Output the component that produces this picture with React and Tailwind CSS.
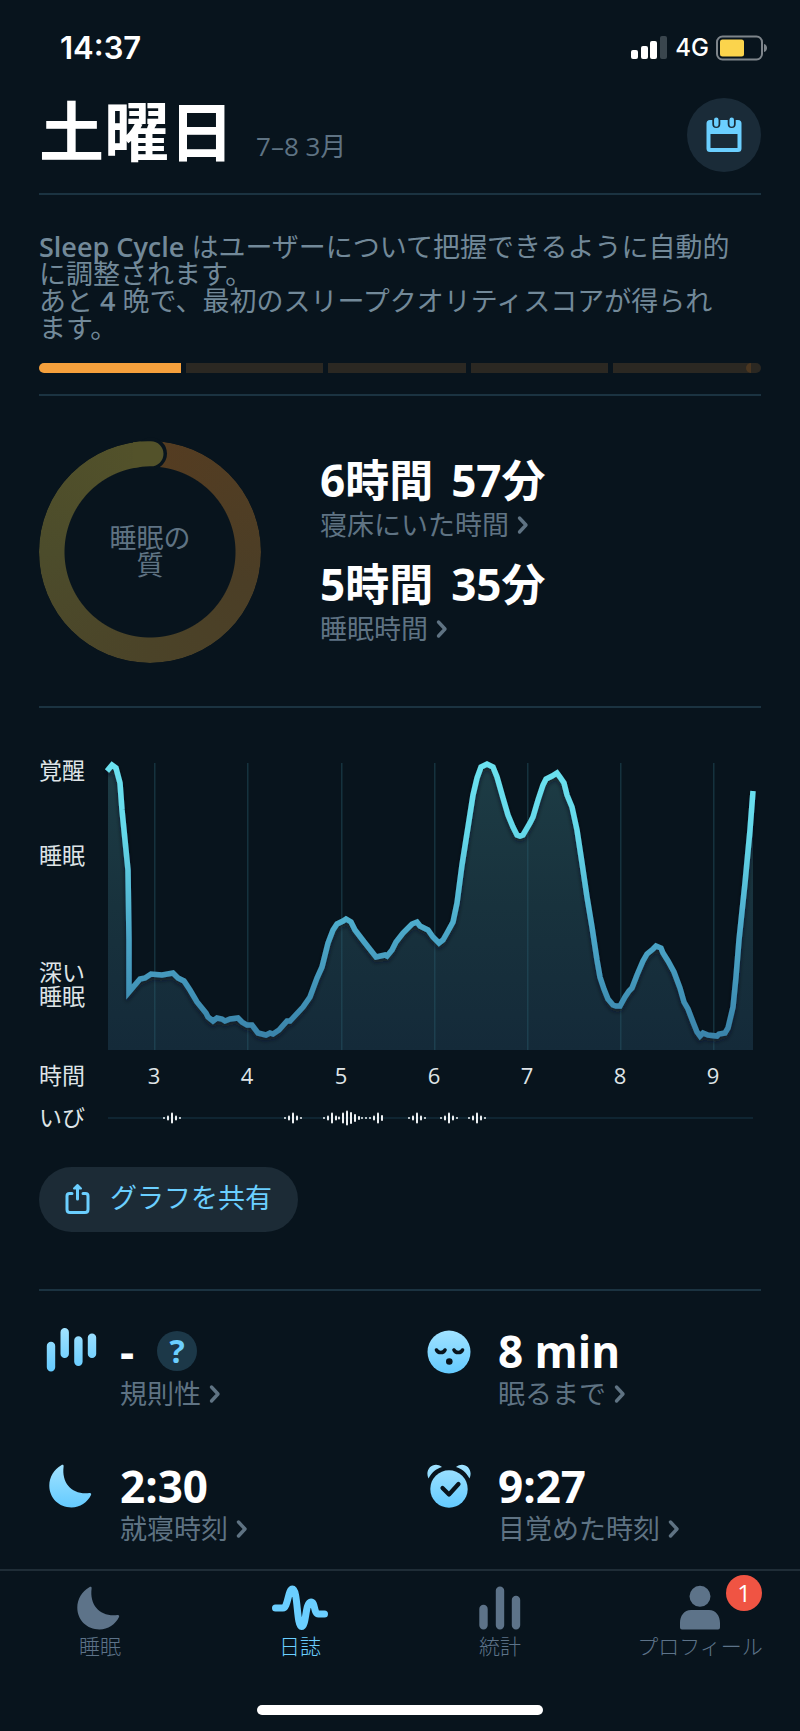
import { useState } from 'react'

const curve = [
  [-1, 8], [4, 2], [8, 5], [12, 20], [14, 47], [18, 87], [20, 107], [21, 177], [21, 229], [32, 216], [37, 215], [43, 211],
  [54, 212], [65, 210], [70, 215], [76, 218], [82, 227], [89, 239], [98, 250], [100, 254], [105, 258], [109, 255],
  [114, 256], [117, 258], [122, 256], [130, 255], [134, 259], [139, 262], [144, 262], [150, 270], [158, 272], [162, 270],
  [165, 271], [171, 267], [179, 258], [182, 258], [195, 244], [202, 234], [209, 215], [214, 204], [220, 180], [225, 167],
  [229, 161], [235, 158], [238, 156], [243, 159], [247, 167], [257, 180], [268, 194], [277, 192], [279, 193], [284, 187],
  [288, 179], [295, 170], [304, 161], [309, 159], [312, 163], [320, 167], [325, 174], [331, 180], [335, 177], [339, 170],
  [345, 159], [349, 140], [354, 102], [360, 64], [365, 32], [369, 15], [373, 4], [379, 1], [385, 4], [389, 14], [395, 35],
  [400, 52], [405, 64], [409, 72], [412, 73], [415, 72], [422, 60], [425, 54], [430, 37], [435, 22], [438, 16], [444, 13],
  [449, 10], [452, 14], [456, 20], [459, 32], [464, 44], [469, 67], [474, 100], [479, 134], [484, 164], [489, 197],
  [492, 214], [496, 226], [500, 236], [505, 242], [508, 243], [512, 243], [517, 234], [521, 228], [524, 225], [529, 212],
  [535, 198], [539, 191], [545, 186], [548, 183], [553, 185], [555, 190], [560, 198], [566, 209], [572, 225], [576, 239],
  [580, 246], [585, 259], [589, 269], [592, 273], [595, 270], [600, 272], [609, 273], [611, 271], [617, 270], [620, 265],
  [625, 244], [628, 214], [631, 177], [637, 120], [642, 67], [645, 28],
]

const hours = [
  { label: '3', x: 46 },
  { label: '4', x: 139 },
  { label: '5', x: 233 },
  { label: '6', x: 326 },
  { label: '7', x: 419 },
  { label: '8', x: 512 },
  { label: '9', x: 605 },
]

// [x, height] of every snore bar
const single = (x) => [[x - 8, 2], [x - 4, 5], [x, 11], [x + 4, 5], [x + 8, 2]]
const snores = [
  ...single(64), ...single(185),
  [216, 2], [220, 5], [224, 11], [228, 5], [231, 3], [235, 11], [239, 15], [243, 12], [247, 8], [251, 4],
  [254, 2], [258, 2], [262, 2], [266, 5], [270, 11], [274, 6],
  ...single(309), ...single(341), ...single(369),
]

const line = 'M' + curve.map((p) => p.join(' ')).join('L')

function Chevron() {
  return (
    <svg viewBox="0 0 12 20" className="h-5 w-3 shrink-0" fill="none" stroke="currentColor" strokeWidth="3.4" strokeLinecap="round" strokeLinejoin="round">
      <path d="M2.5 3 9 10 2.5 17" />
    </svg>
  )
}

function Divider() {
  return <hr className="h-[2px] border-0 bg-[#1b3341]" />
}

function StatusBar() {
  return (
    <div className="flex h-24 items-center justify-between pl-[60px] pr-8 font-['Inter'] text-white">
      <span className="text-[31px] font-semibold">14:37</span>
      <div className="flex items-center gap-[7px]">
        <svg width="37" height="24" viewBox="0 0 37 24" fill="#fff">
          <rect x="0" y="14" width="7" height="9" rx="2" />
          <rect x="10" y="10" width="7" height="13" rx="2" />
          <rect x="19" y="5" width="7" height="18" rx="2" />
          <rect x="29" y="0" width="7" height="23" rx="2" fill="#3a464e" />
        </svg>
        <span className="text-[24px] font-medium">4G</span>
        <svg width="52" height="26" viewBox="0 0 52 26">
          <rect x="1" y="1.5" width="45" height="23" rx="5.5" fill="none" stroke="#7e858b" strokeWidth="2" />
          <rect x="4" y="4.5" width="24" height="17" rx="2.5" fill="#fbd44c" />
          <path d="M48 9c4 1 4 7 0 8z" fill="#7e858b" />
        </svg>
      </div>
    </div>
  )
}

function Header() {
  return (
    <header className="flex justify-between pb-[21px] pt-[2px]">
      <div className="flex items-end gap-[22px] pb-2">
        <h1 className="text-[65px] font-bold leading-[66px] text-white">土曜日</h1>
        <span className="pb-0.5 text-[26px] leading-[32px] text-[#5f7383]">7–8 3月</span>
      </div>
      <button aria-label="カレンダー" className="flex size-[74px] items-center justify-center rounded-full bg-[#1a2b38]">
        <svg width="36" height="36" viewBox="0 0 36 36">
          <path fillRule="evenodd" fill="#6bcfff" d="M4 3h28a3.500 3.500 0 0 1 3.500 3.500v25a3.500 3.500 0 0 1-3.500 3.500h-28a3.500 3.500 0 0 1-3.500-3.500v-25A3.500 3.500 0 0 1 4 3zM4.500 17v14h27V17z" />
          <path d="M10.300 3v4M25.700 3v4" stroke="#1a2b38" strokeWidth="8" strokeLinecap="round" />
          <path d="M10.300 2.800v4.700M25.700 2.800v4.700" stroke="#6bcfff" strokeWidth="4.500" strokeLinecap="round" />
        </svg>
      </button>
    </header>
  )
}

function Progress() {
  return (
    <div className="mt-[22px] flex h-[10px] gap-[5px] overflow-hidden rounded-full">
      <div className="flex-[142] bg-[#f5a03c]" />
      <div className="flex-[137] bg-[#2b2822]" />
      <div className="flex-[137] bg-[#2b2822]" />
      <div className="flex-[137] bg-[#2b2822]" />
      <div className="flex flex-[148] justify-end bg-[#2b2822]">
        <div className="mr-[10px] w-[5px] rounded-l-full bg-[#4a3620]" />
      </div>
    </div>
  )
}

function Quality() {
  return (
    <div className="relative size-[222px]">
      <div className="size-full rounded-full bg-[conic-gradient(#553c21,#4b3e26_30%,#4b4328_50%,#4c4c2b_75%,#53522a)] [mask:radial-gradient(closest-side,transparent_85px,#000_86px)]" />
      <svg viewBox="0 0 222 222" className="absolute inset-0 size-full overflow-visible">
        <circle cx="112" cy="12.600" r="16" fill="#08141d" />
        <path d="M94 1.300Q103 0 112 .3a12.400 12.400 0 0 1 0 25Q103 25.200 94 27z" fill="#53522a" />
      </svg>
      <div className="absolute inset-0 flex items-center justify-center pb-[3px] text-center text-[27px] leading-[27px] text-[#5f7383]">
        睡眠の<br />質
      </div>
    </div>
  )
}

function Duration({ hours, minutes, label }) {
  return (
    <div>
      <p className="flex gap-[18px] text-[44px] font-bold leading-[50px] text-white">
        <span>{hours}時間</span>
        <span>{minutes}分</span>
      </p>
      <a href="#" className="mt-0.5 flex items-center gap-2 text-[27px] leading-[36px] text-[#5f7383]">
        {label} <Chevron />
      </a>
    </div>
  )
}

function Chart() {
  return (
    <svg viewBox="0 0 645 368" className="min-w-0 flex-1 overflow-visible">
      <defs>
        <linearGradient id="line" gradientUnits="userSpaceOnUse" x1="0" y1="0" x2="0" y2="287">
          <stop offset="0" stopColor="#6ce2f0" />
          <stop offset="0.250" stopColor="#64d8ea" />
          <stop offset="0.600" stopColor="#4ba6c8" />
          <stop offset="1" stopColor="#387fa6" />
        </linearGradient>
        <linearGradient id="area" gradientUnits="userSpaceOnUse" x1="0" y1="0" x2="0" y2="287">
          <stop offset="0" stopColor="#1d3c45" />
          <stop offset="0.500" stopColor="#18323d" />
          <stop offset="1" stopColor="#142a39" />
        </linearGradient>
        <filter id="shadow" filterUnits="userSpaceOnUse" x="-10" y="-10" width="670" height="310">
          <feDropShadow dx="0" dy="3" stdDeviation="2" floodColor="#08141d" floodOpacity="0.600" />
        </filter>
      </defs>
      <path d={line.replace('M-1', 'M0') + 'L645 287L0 287Z'} fill="url(#area)" />
      {hours.map((h) => (
        <rect key={h.label} x={h.x} y="0" width="1.500" height="287" fill="#2a6070" fillOpacity="0.400" />
      ))}
      <path d={line} fill="none" stroke="url(#line)" strokeWidth="5.500" filter="url(#shadow)" />
      {hours.map((h) => (
        <text key={h.label} x={h.x} y="321" textAnchor="middle" fontSize="22" fontWeight="500" fill="#dfe4e7">{h.label}</text>
      ))}
      <rect x="0" y="354" width="645" height="2" fill="#0f2532" />
      {snores.map(([x, h]) => (
        <rect key={x} x={x - 1} y={355 - h / 2} width="2" height={h} rx="1" fill="#eef1f3" />
      ))}
    </svg>
  )
}

function Graph() {
  return (
    <section className="flex pb-[36px] pr-[8px] pt-[55px]">
      <div className="flex w-[69px] flex-col text-[23px] leading-[24px] text-[#dfe4e7]">
        <span className="mt-[-5px]">覚醒</span>
        <span className="mt-[61px]">睡眠</span>
        <span className="mt-[93px]">深い<br />睡眠</span>
        <span className="mt-[55px]">時間</span>
        <span className="mt-[18px]">いび</span>
      </div>
      <Chart />
    </section>
  )
}

function Stat({ icon, value, label, help }) {
  return (
    <div className="flex">
      <div className="flex h-[48px] w-[72px] shrink-0 items-center pl-1">{icon}</div>
      <div className="pl-[9px]">
        <div className="flex h-[48px] items-center gap-[23px] text-[44px] font-bold text-white">
          {value}
          {help && (
            <button aria-label="ヘルプ" className="flex size-10 items-center justify-center rounded-full bg-[#1c3848] text-[32px] text-[#6bcfff]">?</button>
          )}
        </div>
        <a href="#" className="mt-px flex items-center gap-2 text-[27px] leading-[36px] text-[#5f7383]">
          {label} <Chevron />
        </a>
      </div>
    </div>
  )
}

const barsIcon = (
  <svg width="58" height="46" viewBox="0 1 58 46" stroke="url(#ice)" strokeWidth="8.400" strokeLinecap="round">
    <path d="M8 19v21.300M21.700 5.300v21.600M35.400 13.500v21.300M49 10.600v16.300" />
  </svg>
)

const moonIcon = (
  <svg width="58" height="46" viewBox="0 0 58 46">
    <path fill="url(#ice)" d="M18.300 2.200c1.400-.9 2.600-.3 2.300 1.200-2.200 17 8.700 28.600 25.800 26.600 1.400-.2 2.200.7 1.600 2C44.400 39.500 37 44.500 28.500 44.500 16 44.500 6.300 35 6.300 22.800 6.300 14 11 6.500 18.300 2.200z" />
  </svg>
)

const faceIcon = (
  <svg width="55" height="46" viewBox="-5 -1 55 46">
    <circle cx="23" cy="23" r="21.500" fill="url(#ice)" />
    <path d="M10.500 21c1.500 3.400 7 3.400 8.500 0M28 21c1.500 3.400 7 3.400 8.500 0" fill="none" stroke="#08141d" strokeWidth="3.600" strokeLinecap="round" />
    <circle cx="23.300" cy="32.500" r="3.300" fill="#08141d" />
  </svg>
)

const alarmIcon = (
  <svg width="55" height="46" viewBox="-5 0 55 46">
    <path fill="url(#ice)" d="M2.500 15.500C-2 6 8 -2.500 16 4 10 6 6 9 2.500 15.500zM43.500 15.500C48 6 38-2.500 30 4c6 2 10 5 13.500 11.500z" />
    <circle cx="23" cy="26" r="18.700" fill="url(#ice)" />
    <path d="m16.500 25 6.500 6.500L32.500 21" fill="none" stroke="#08141d" strokeWidth="4.200" strokeLinecap="round" strokeLinejoin="round" />
  </svg>
)

const tabs = [
  {
    label: '睡眠',
    icon: <path fill="currentColor" d="M18.300 2.200c1.400-.9 2.600-.3 2.300 1.200-2.200 17 8.700 28.600 25.800 26.600 1.400-.2 2.200.7 1.600 2C44.400 39.500 37 44.500 28.500 44.500 16 44.500 6.300 35 6.300 22.800 6.300 14 11 6.500 18.300 2.200z" />,
  },
  {
    label: '日誌',
    icon: <path fill="none" stroke="currentColor" strokeWidth="7" strokeLinecap="round" strokeLinejoin="round" d="M4.500 23h7.500C17 23 17 4 21.500 4c5.500 0 4 37.500 9 37.500S34 17 40 17c4.500 0 2.500 12 7.500 12h6" />,
  },
  {
    label: '統計',
    icon: <path stroke="currentColor" strokeWidth="8.400" strokeLinecap="round" d="M12.500 24v16.300M29 5.600v34.700M45 15v25.300" />,
  },
  {
    label: 'プロフィール',
    badge: '1',
    icon: <path fill="currentColor" d="M29 .8a10.500 10.500 0 1 1 0 21 10.500 10.500 0 0 1 0-21zM20 25h18c7 0 11 6 11 13v4.500q0 2-2 2H11q-2 0-2-2V38c0-7 4-13 11-13z" />,
  },
]

function TabBar() {
  const [active, setActive] = useState('日誌')

  return (
    <nav className="mt-[22px] grid grid-cols-4 border-t-2 border-[#1f2d37] pt-[14px]">
      {tabs.map((t) => (
        <button
          key={t.label}
          onClick={() => setActive(t.label)}
          className={'flex flex-col items-center ' + (active === t.label ? 'text-[#6bcfff]' : 'text-[#5d7389]')}
        >
          <span className="relative">
            <svg width="58" height="46" viewBox="0 0 58 46">{t.icon}</svg>
            {t.badge && (
              <span className="absolute left-[55px] top-[-10px] flex size-9 items-center justify-center rounded-full bg-[#f05443] text-[24px] text-white">{t.badge}</span>
            )}
          </span>
          <span className="text-[21px] font-light leading-[30px]">{t.label}</span>
        </button>
      ))}
    </nav>
  )
}

export default function App() {
  return (
    <div className="min-h-screen bg-[#08141d] font-['Open_Sans','Noto_Sans_CJK_JP',sans-serif]">
      <svg className="absolute size-0" aria-hidden="true">
        <linearGradient id="ice" gradientUnits="userSpaceOnUse" x1="0" y1="0" x2="0" y2="46">
          <stop offset="0" stopColor="#a3e3ff" />
          <stop offset="1" stopColor="#62caff" />
        </linearGradient>
      </svg>
      <StatusBar />
      <main className="px-[39px]">
        <Header />
        <Divider />
        <section className="pb-[21px] pt-[38px]">
          <p className="text-[27px] leading-[27px] text-[#728999]">
            <span className="font-semibold">Sleep Cycle</span> はユーザーについて把握できるように自動的<br />
            に調整されます。<br />
            あと <span className="font-semibold">4</span> 晩で、最初のスリープクオリティスコアが得られ<br />
            ます。
          </p>
          <Progress />
        </section>
        <Divider />
        <section className="flex gap-[59px] pb-[43px] pt-[45px]">
          <Quality />
          <div className="flex flex-col gap-4 pt-[14px]">
            <Duration hours="6" minutes="57" label="寝床にいた時間" />
            <Duration hours="5" minutes="35" label="睡眠時間" />
          </div>
        </section>
        <Divider />
        <Graph />
        <button className="flex h-[65px] items-center gap-5 rounded-full bg-[#1c2b36] px-[26px] pb-[3px] text-[27px] text-[#6bcfff]">
          <svg width="25" height="31" viewBox="0 0 25 31" fill="none" stroke="currentColor" strokeWidth="3" strokeLinecap="round" strokeLinejoin="round">
            <path d="M7 10.500H4.500Q2 10.500 2 13v13.500Q2 29.500 5 29.500h15q3 0 3-3V13q0-2.500-2.500-2.500H18M12.500 16V5" />
            <path d="m12.500 2 3.500 3.500h-7z" fill="currentColor" strokeWidth="2" />
          </svg>
          グラフを共有
        </button>
        <div className="h-[57px]" />
        <Divider />
        <section className="grid grid-cols-[378fr_344fr] gap-y-[50px] pt-[36px]">
          <Stat icon={barsIcon} value="-" label="規則性" help />
          <Stat icon={faceIcon} value="8 min" label="眠るまで" />
          <Stat icon={moonIcon} value="2:30" label="就寝時刻" />
          <Stat icon={alarmIcon} value="9:27" label="目覚めた時刻" />
        </section>
      </main>
      <TabBar />
      <div className="flex justify-center pb-[14px] pt-[44px]">
        <div className="h-[10px] w-[286px] rounded-full bg-white" />
      </div>
    </div>
  )
}
